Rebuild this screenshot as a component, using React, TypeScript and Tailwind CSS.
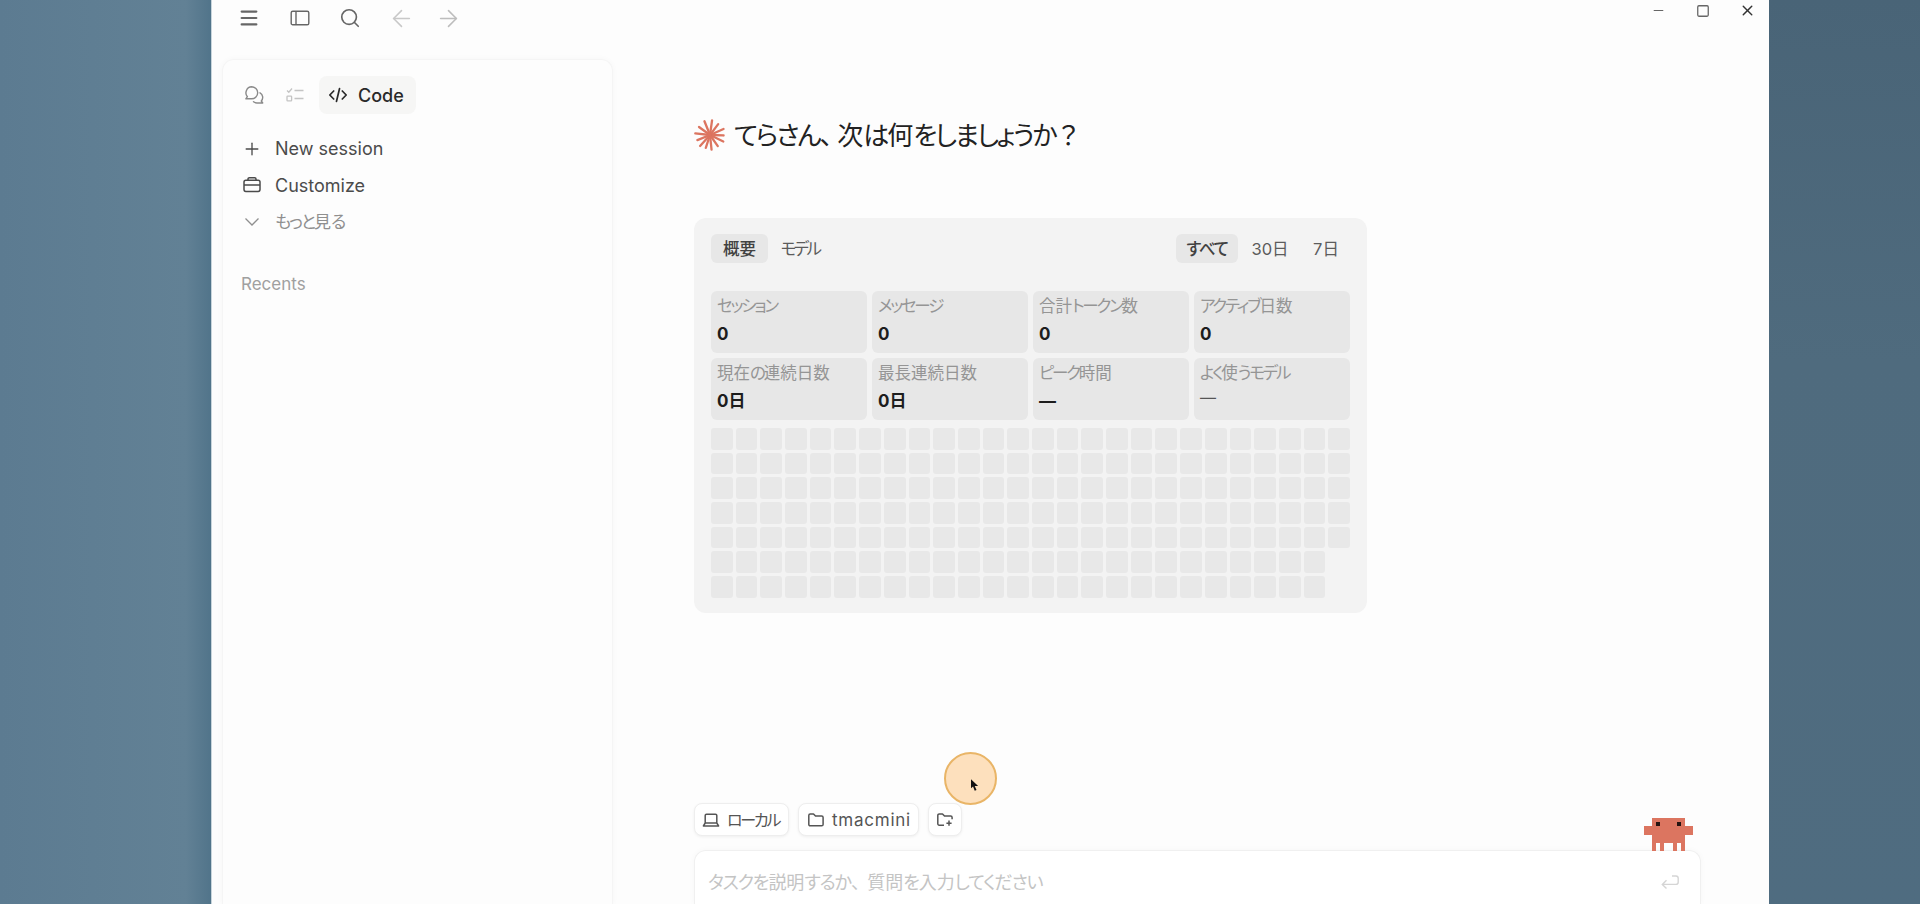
import type { ReactNode } from 'react';
import { ArrowLeft, ArrowRight, Menu, Minus, Plus, Search, Square, X } from 'lucide-react';

const stats = [
    { label: "セッション", value: "0" },
    { label: "メッセージ", value: "0" },
    { label: "合計トークン数", value: "0" },
    { label: "アクティブ日数", value: "0" },
    { label: "現在の連続日数", value: "0日" },
    { label: "最長連続日数", value: "0日" },
    { label: "ピーク時間", value: "—" },
    { label: "よく使うモデル", value: "—", plain: true },
];

const WEEKS = 26;
const DAYS_THIS_WEEK = 5;

// Sets kana tighter than kanji and keeps punctuation at full width
const Ja = ({ kana, punct = "", children }: { kana: string; punct?: string; children: string }) => (
    <span className="whitespace-nowrap">
        {children.split(/([ぁ-ヶー]+|[、？])/).filter(Boolean).map((run, i) => (
            <span key={i} className={/[、？]/.test(run) ? `[font-feature-settings:normal] ${punct}` : /[ぁ-ヶー]/.test(run) ? kana : ""}>
                {run}
            </span>
        ))}
    </span>
);

const TitleBar = () => (
    <header className="flex h-[59px] shrink-0 items-start justify-between pl-[26px] pr-[13px] text-[#666]">
        <div className="flex h-9 items-center">
            <Menu className="mr-[30px] h-[22px] w-[22px]" strokeWidth={2.4} />
            <svg className="mr-[29px] h-5 w-5" viewBox="0 0 20 20" fill="none" stroke="currentColor" strokeWidth="1.4">
                <rect x="1.2" y="3.2" width="17.6" height="13.6" rx="1.6" />
                <path d="M6 3.2v13.6" />
            </svg>
            <Search className="mr-[27px] h-[22px] w-[22px]" strokeWidth={1.8} />
            <ArrowLeft className="mr-[20px] h-[27px] w-[27px] text-[#c8c8c8]" strokeWidth={1.4} />
            <ArrowRight className="h-[27px] w-[27px] text-[#bdbdbd]" strokeWidth={1.4} />
        </div>
        <div className="flex h-[21px] items-center">
            <Minus className="mr-[30px] h-[15px] w-[15px]" strokeWidth={1.6} />
            <Square className="mr-[29px] h-[14px] w-[14px]" strokeWidth={2.2} />
            <X className="h-[17px] w-[17px] text-[#333]" strokeWidth={2} />
        </div>
    </header>
);

const Sidebar = () => (
    <aside className="w-[391px] rounded-t-xl border border-b-0 border-[#f5f5f5] bg-[#fdfdfd] px-[17px] pt-4 shadow-[0_0_6px_rgba(0,0,0,0.03)]">
        {/* Mode tabs */}
        <div className="flex h-[38px] items-center text-[#8a8a8a]">
            <svg className="ml-[4px] h-5 w-5" viewBox="0 0 20 20" fill="none" stroke="currentColor" strokeWidth="1.4" strokeLinejoin="round" strokeLinecap="round">
                <path d="M7.7 1.8a6 6 0 1 1 0 12H1.8l1.6-2.1a6 6 0 0 1 4.3-9.9Z" />
                <path d="M16 7.8a5.3 5.3 0 0 1 1.3 8.2l1.4 2H13a5.6 5.6 0 0 1-3.5-1.2" />
            </svg>
            <svg className="ml-[21px] h-5 w-5 text-[#c4c4c4]" viewBox="0 0 20 20" fill="none" stroke="currentColor" strokeWidth="1.3">
                <path d="m2 5.5 1.8 1.7L7 3.5M9.5 5.5h9M9.5 13.5h9" />
                <rect x="2" y="11.2" width="4.6" height="4.6" rx="0.6" />
            </svg>
            <div className="ml-[14px] flex h-[38px] w-[97px] items-center rounded-lg bg-[#f6f6f5] pl-[10px] text-[#292929]">
                <svg className="h-[18px] w-[18px]" viewBox="0 0 18 18" fill="none" stroke="currentColor" strokeWidth="1.7" strokeLinecap="round" strokeLinejoin="round">
                    <path d="m4.7 5-3.9 4 3.9 4M13.3 5l3.9 4-3.9 4M10.5 2.7l-3 12.6" />
                </svg>
                <span className="ml-[11px] text-[18px] font-medium">Code</span>
            </div>
        </div>

        <nav className="mt-4 text-[18px] text-[#4b4b4b]">
            <div className="flex h-[37px] items-center">
                <Plus className="ml-[2px] mr-[13px] h-5 w-5" strokeWidth={1.6} />
                <span>New session</span>
            </div>
            <div className="flex h-[36px] items-center">
                <svg className="ml-[2px] mr-[13px] h-5 w-5" viewBox="0 0 20 20" fill="none" stroke="currentColor" strokeWidth="1.5">
                    <rect x="2" y="5.2" width="16" height="11.2" rx="1.8" />
                    <path d="M6 5.2V4.1C6 3.3 6.6 2.8 7.3 2.8h5.4c.7 0 1.3.5 1.3 1.3v1.1M2 10h16" />
                </svg>
                <span>Customize</span>
            </div>
            <div className="flex h-[38px] items-center text-[#8f8f8f]">
                <svg className="ml-[2px] mr-[13px] h-5 w-5" viewBox="0 0 20 20" fill="none" stroke="currentColor" strokeWidth="1.3">
                    <path d="m3.5 6.5 6.5 6.5 6.5-6.5" />
                </svg>
                <span className="pt-px text-[17px]"><Ja kana="tracking-[-0.11em]">もっと見る</Ja></span>
            </div>
        </nav>

        <h2 className="mt-[31px] pl-px text-[17px] text-[#a0a0a0]">Recents</h2>
    </aside>
);

const Burst = () => (
    <svg className="h-8 w-8 text-[#dc7560]" viewBox="-16 -16 32 32" stroke="currentColor" strokeWidth="2.3" strokeLinecap="round">
        {[0, 29, 58, 84, 108, 137, 166, 190, 214, 240, 268, 298, 330].map((deg, i) => (
            <path key={deg} d={i % 2 ? "M0 0V-13.6" : "M0 0V-14.8"} transform={`rotate(${deg + 8})`} />
        ))}
    </svg>
);

const Tab = ({ active, className, children }: { active?: boolean; className?: string; children: ReactNode }) => (
    <button className={`h-[29px] rounded-md pt-px text-center ${active ? "bg-[#e7e7e7] font-medium text-[#414141]" : "text-[#5c5c5c]"} ${className}`}>
        {children}
    </button>
);

const UsagePanel = () => (
    <section className="mt-[63px] h-[395px] w-[673px] rounded-xl bg-[#f3f3f3] px-[17px] pt-4">
        <div className="flex justify-between text-[16.5px]">
            <div className="flex">
                <Tab active className="w-[57px]">概要</Tab>
                <Tab className="w-[64px]"><Ja kana="tracking-[-0.16em]">モデル</Ja></Tab>
            </div>
            <div className="flex">
                <Tab active className="w-[62px]"><Ja kana="tracking-[-0.08em]">すべて</Ja></Tab>
                <Tab className="w-[64px]">30日</Tab>
                <Tab className="w-[48px]">7日</Tab>
            </div>
        </div>

        <div className="mt-[28px] grid grid-cols-4 gap-x-[5px] gap-y-[5px]">
            {stats.map((stat) => (
                <div key={stat.label} className="h-[62px] rounded-md bg-[#e7e7e7] px-[6px] pt-[3px]">
                    <div className="text-[16.5px] leading-[24px] text-[#959595]">
                        <Ja kana="tracking-[-0.135em]">{stat.label}</Ja>
                    </div>
                    <div className={stat.plain ? "text-[16px] leading-[24px] text-[#555]" : "text-[17px] font-bold leading-[32px] text-[#1d1d1d]"}>
                        {stat.value}
                    </div>
                </div>
            ))}
        </div>

        {/* Activity heatmap, one column per week */}
        <div className="mt-[8px] grid grid-flow-col grid-cols-26 grid-rows-[repeat(7,21.7px)] gap-[3px]">
            {Array.from({ length: (WEEKS - 1) * 7 + DAYS_THIS_WEEK }, (_, i) => (
                <div key={i} className="rounded-[3px] bg-[#e8e8e8]" />
            ))}
        </div>
    </section>
);

const Chip = ({ className, children }: { className: string; children?: ReactNode }) => (
    <button className={`flex h-[33px] items-center rounded-lg border border-[#eee] bg-white shadow-[0_1px_3px_rgba(0,0,0,0.06)] ${className}`}>
        {children}
    </button>
);

const Crab = () => (
    <svg className="absolute right-[7px] top-[-33px] h-[33px] w-[49px]" viewBox="0 0 12 8" preserveAspectRatio="none" shapeRendering="crispEdges">
        <path fill="#dc7560" d="M2 0h8v2h2v2h-2v4H9V6H8v2H7V6H5v2H4V6H3v2H2V4H0V2h2z" />
        <path fill="#261411" d="M3 1h1v1H3zM8 1h1v1H8z" />
    </svg>
);

const Composer = () => (
    <div className="mt-auto w-[1007px]">
        <div className="flex text-[#555]">
            <Chip className="w-[95px] pl-[7px]">
                <svg className="h-[18px] w-[18px] shrink-0" viewBox="0 0 18 18" fill="none" stroke="currentColor" strokeWidth="1.5" strokeLinejoin="round">
                    <path d="M3.2 12V4.6c0-.8.5-1.3 1.3-1.3h9c.8 0 1.3.5 1.3 1.3V12M3.2 12h11.6l1.8 3H1.4z" />
                </svg>
                <span className="ml-[7px] text-[16px]"><Ja kana="tracking-[-0.14em]">ローカル</Ja></span>
            </Chip>
            <Chip className="ml-[9px] w-[121px] pl-[8px]">
                <svg className="h-[18px] w-[18px] shrink-0" viewBox="0 0 18 18" fill="none" stroke="currentColor" strokeWidth="1.5" strokeLinejoin="round">
                    <path d="M1.8 4.4c0-.8.6-1.4 1.4-1.4h3.3l2 2.1h6.1c.9 0 1.5.6 1.5 1.4v6.9c0 .8-.6 1.4-1.4 1.4H3.2c-.8 0-1.4-.6-1.4-1.4z" />
                </svg>
                <span className="ml-[7px] pt-[2px] text-[17px] tracking-[0.045em]">tmacmini</span>
            </Chip>
            <Chip className="ml-[9px] w-[34px] pl-[7px]">
                <svg className="h-[18px] w-[18px]" viewBox="0 0 18 18" fill="none" stroke="currentColor" strokeWidth="1.5" strokeLinejoin="round">
                    <path d="M8 14.2H3.2c-.8 0-1.4-.6-1.4-1.4V4.4C1.8 3.6 2.4 3 3.2 3h3.3l2 2.1h6.1c.9 0 1.5.6 1.5 1.4v1.7M13 9.6v5.2M10.4 12.2h5.2" />
                </svg>
            </Chip>
        </div>

        <div className="relative mt-[14px] flex h-[54px] justify-between rounded-t-xl border border-b-0 border-[#f0f0f0] bg-white pl-[13px] pr-[20px] pt-[14px] shadow-[0_0_6px_rgba(0,0,0,0.03)]">
            <span className="pt-[2px] text-[18px] leading-[32px] text-[#c4c4c4]">
                <Ja kana="tracking-[-0.06em]" punct="tracking-[-0.1em]">タスクを説明するか、質問を入力してください</Ja>
            </span>
            <svg className="mt-[8px] h-5 w-5 text-[#d5d5d5]" viewBox="0 0 20 20" fill="none" stroke="currentColor" strokeWidth="1.4">
                <path d="M12 3h4c1.4 0 2.2.8 2.2 2.2v4.1c0 1.3-.8 2.1-2.2 2.1H2.5M6.5 7.2l-4.2 4.2 4.2 4.2" />
            </svg>
            <Crab />
        </div>
    </div>
);

// Mouse pointer with its click highlight
const Pointer = () => (
    <div className="absolute left-[944px] top-[752px] h-[53px] w-[53px] rounded-full border-2 border-[#e9b567] bg-[#fde0bd]">
        <svg className="absolute left-[25px] top-[25px] h-[12px] w-[8px]" viewBox="0 0 9 13">
            <path d="M0 0v10.2l2.3-2.1L4.2 13l2-.8-2-4.6H8z" fill="#111" />
        </svg>
    </div>
);

const App = () => {
    return (
        <div
            lang="ja"
            className="relative flex h-[904px] w-full overflow-hidden bg-[#5e7d92] font-['Inter','Noto_Sans_CJK_JP',sans-serif] [font-feature-settings:'palt']"
        >
            <div className="w-[211px] shrink-0 bg-linear-to-r from-[#5c7b91] via-[#628195] via-88% to-[#51748a]" />
            <div className="flex flex-1 flex-col border-l border-[#c8d5dc] bg-[#fdfdfd]">
                <TitleBar />
                <div className="flex flex-1 pl-[10px]">
                    <Sidebar />
                    <main className="flex flex-1 flex-col pl-[81px] pt-[56px]">
                        <div className="flex h-10 items-center">
                            <Burst />
                            <h1 className="ml-[8px] text-[26px] text-[#222]">
                                <Ja kana="tracking-[-0.08em]" punct="tracking-[-0.32em]">てらさん、次は何をしましょうか？</Ja>
                            </h1>
                        </div>
                        <UsagePanel />
                        <Composer />
                    </main>
                </div>
            </div>
            <div className="w-[151px] shrink-0 bg-linear-to-b from-[#496477] via-[#4f6b7e] via-40% to-[#4f6c80]" />
            <Pointer />
        </div>
    );
};

export default App;
